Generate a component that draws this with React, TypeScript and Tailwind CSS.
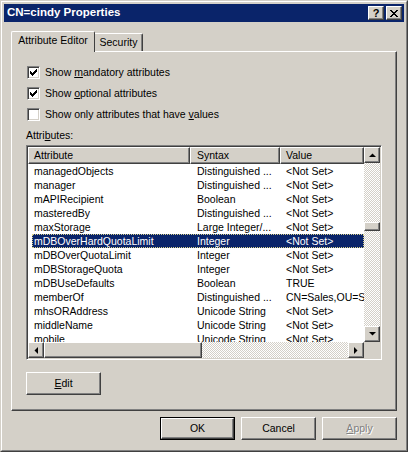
import React from 'react';

const rows: [string, string, string][] = [
  ['managedObjects', 'Distinguished ...', '<Not Set>'],
  ['manager', 'Distinguished ...', '<Not Set>'],
  ['mAPIRecipient', 'Boolean', '<Not Set>'],
  ['masteredBy', 'Distinguished ...', '<Not Set>'],
  ['maxStorage', 'Large Integer/...', '<Not Set>'],
  ['mDBOverHardQuotaLimit', 'Integer', '<Not Set>'],
  ['mDBOverQuotaLimit', 'Integer', '<Not Set>'],
  ['mDBStorageQuota', 'Integer', '<Not Set>'],
  ['mDBUseDefaults', 'Boolean', 'TRUE'],
  ['memberOf', 'Distinguished ...', 'CN=Sales,OU=Sales,DC=corp'],
  ['mhsORAddress', 'Unicode String', '<Not Set>'],
  ['middleName', 'Unicode String', '<Not Set>'],
  ['mobile', 'Unicode String', '<Not Set>'],
];

const raised =
  'border border-t-white border-l-white border-r-[#404040] border-b-[#404040] shadow-[inset_-1px_-1px_0_#808080] bg-[#d4d0c8]';
const sunken =
  'border border-t-[#808080] border-l-[#808080] border-r-white border-b-white shadow-[inset_1px_1px_0_#404040,inset_-1px_-1px_0_#d4d0c8]';
const track = 'bg-[repeating-conic-gradient(#fff_0_25%,#d4d0c8_0_50%)] bg-size-[2px_2px]';

const Check = () => (
  <svg width="7" height="7" viewBox="0 0 7 7" shapeRendering="crispEdges">
    <rect x="0" y="2" width="1" height="3" fill="#000" />
    <rect x="1" y="3" width="1" height="3" fill="#000" />
    <rect x="2" y="4" width="1" height="3" fill="#000" />
    <rect x="3" y="3" width="1" height="3" fill="#000" />
    <rect x="4" y="2" width="1" height="3" fill="#000" />
    <rect x="5" y="1" width="1" height="3" fill="#000" />
    <rect x="6" y="0" width="1" height="3" fill="#000" />
  </svg>
);

const Arrow = ({ dir }: { dir: 'up' | 'down' | 'left' | 'right' }) => {
  const pts = {
    up: '0,4 7,4 3.5,0.5',
    down: '0,0 7,0 3.5,3.5',
    left: '4,0 4,7 0.5,3.5',
    right: '0,0 0,7 3.5,3.5',
  }[dir];
  const vertical = dir === 'up' || dir === 'down';
  return (
    <svg width={vertical ? 7 : 4} height={vertical ? 4 : 7} viewBox={vertical ? '0 0 7 4' : '0 0 4 7'}>
      <polygon points={pts} fill="#000" />
    </svg>
  );
};

const CheckRow = ({ checked, children }: { checked: boolean; children: React.ReactNode }) => (
  <div className="flex items-center gap-[5px] h-[13px]">
    <div className={`w-[13px] h-[13px] bg-white flex items-center justify-center ${sunken}`}>
      {checked && <Check />}
    </div>
    <span>{children}</span>
  </div>
);

const Button = ({ children, disabled }: { children: React.ReactNode; disabled?: boolean }) => (
  <div
    className={`w-[75px] h-[23px] flex items-center justify-center ${raised} ${
      disabled ? 'text-[#808080] [text-shadow:1px_1px_0_#fff]' : ''
    }`}
  >
    {children}
  </div>
);

export default function App() {
  return (
    <div
      className="w-[408px] h-[452px] bg-[#d4d0c8] border border-t-[#d4d0c8] border-l-[#d4d0c8] border-r-[#404040] border-b-[#404040] text-[10.5px] text-black select-none"
      style={{ fontFamily: '"Liberation Sans", Arial, sans-serif' }}
    >
      <div className="h-full border border-t-white border-l-white border-r-[#808080] border-b-[#808080] p-[2px] flex flex-col">
        {/* title bar */}
        <div className="h-[18px] bg-[#0a246a] flex items-center pl-[3px] pr-[2px]">
          <span className="text-white font-bold text-[11.5px] flex-1">CN=cindy Properties</span>
          <div className={`w-[16px] h-[14px] flex items-center justify-center font-bold text-[11px] leading-none ${raised}`}>?</div>
          <div className={`w-[16px] h-[14px] ml-[2px] flex items-center justify-center ${raised}`}>
            <svg width="8" height="7" viewBox="0 0 8 7" shapeRendering="crispEdges">
              <path d="M0 0h2v1h-2zM6 0h2v1h-2zM1 1h2v1h-2zM5 1h2v1h-2zM2 2h4v1h-4zM3 3h2v1h-2zM2 4h4v1h-4zM1 5h2v1h-2zM5 5h2v1h-2zM0 6h2v1h-2zM6 6h2v1h-2z" fill="#000" />
            </svg>
          </div>
        </div>

        {/* tabs */}
        <div className="mt-[9px] ml-[7px] h-[20px] flex items-end">
          <div className="relative z-10 -mb-px h-[21px] w-[84px] bg-[#d4d0c8] border-t border-l border-r border-t-white border-l-white border-r-[#404040] rounded-tl-[2px] rounded-tr-[2px] flex items-center justify-center pb-[2px]">
            Attribute Editor
          </div>
          <div className="h-[18px] w-[48px] border-t border-r border-t-white border-r-[#404040] shadow-[inset_-1px_0_0_#808080] rounded-tr-[2px] flex items-center justify-center">
            Security
          </div>
        </div>

        {/* panel */}
        <div className="ml-[7px] w-[386px] h-[360px] border border-t-white border-l-white border-r-[#404040] border-b-[#404040] shadow-[inset_-1px_-1px_0_#808080] pl-[14px] pt-[14px] flex flex-col">
          <div className="ml-px">
            <CheckRow checked>
              Show <u>m</u>andatory attributes
            </CheckRow>
            <div className="mt-[8px]">
              <CheckRow checked>
                Show <u>o</u>ptional attributes
              </CheckRow>
            </div>
            <div className="mt-[8px]">
              <CheckRow checked={false}>
                Show only attributes that have <u>v</u>alues
              </CheckRow>
            </div>
          </div>
          <div className="mt-[8px] h-[13px] leading-[13px]">
            Attri<u>b</u>utes:
          </div>

          {/* list view */}
          <div className={`mt-[3px] w-[356px] h-[215px] bg-white flex flex-col ${sunken} p-px`}>
            <div className="flex h-[195px]">
              <div className="flex-1 flex flex-col overflow-hidden">
                <div className="flex h-[17px] shrink-0">
                  <div className={`w-[162px] h-full flex items-center pl-[5px] ${raised}`}>Attribute</div>
                  <div className={`w-[90px] h-full flex items-center pl-[6px] ${raised}`}>Syntax</div>
                  <div className={`flex-1 h-full flex items-center pl-[5px] ${raised}`}>Value</div>
                </div>
                <div className="flex-1 overflow-hidden">
                  {rows.map(([a, s, v], i) => {
                    const sel = i === 5;
                    return (
                      <div
                        key={a}
                        className={`ml-[4px] h-[14px] pt-px flex items-center whitespace-nowrap ${
                          sel ? 'bg-[#0a246a] text-white outline-1 outline-dotted outline-[#d8d08a] -outline-offset-1' : ''
                        }`}
                      >
                        <div className="w-[158px] pl-[2px] overflow-hidden">{a}</div>
                        <div className="w-[90px] pl-[7px] overflow-hidden">{s}</div>
                        <div className="flex-1 pl-[6px] overflow-hidden">{v}</div>
                      </div>
                    );
                  })}
                </div>
              </div>
              {/* vertical scrollbar */}
              <div className={`w-[16px] flex flex-col ${track}`}>
                <div className={`h-[16px] flex items-center justify-center ${raised}`}>
                  <Arrow dir="up" />
                </div>
                <div className="h-[59px]" />
                <div className={`h-[9px] ${raised}`} />
                <div className="flex-1" />
                <div className={`h-[16px] flex items-center justify-center ${raised}`}>
                  <Arrow dir="down" />
                </div>
              </div>
            </div>
            {/* horizontal scrollbar */}
            <div className="flex h-[16px]">
              <div className={`flex-1 flex ${track}`}>
                <div className={`w-[16px] flex items-center justify-center ${raised}`}>
                  <Arrow dir="left" />
                </div>
                <div className={`w-[158px] ${raised}`} />
                <div className="flex-1" />
                <div className={`w-[16px] flex items-center justify-center ${raised}`}>
                  <Arrow dir="right" />
                </div>
              </div>
              <div className="w-[16px] bg-[#d4d0c8]" />
            </div>
          </div>

          <div className="mt-[12px]">
            <Button>
              <u>E</u>dit
            </Button>
          </div>
        </div>

        {/* dialog buttons */}
        <div className="mt-[6px] mr-[7px] flex justify-end gap-[6px]">
          <div className="border border-black">
            <div className="w-[73px] h-[21px] flex items-center justify-center border border-t-white border-l-white border-r-[#404040] border-b-[#404040] shadow-[inset_-1px_-1px_0_#808080]">
              OK
            </div>
          </div>
          <Button>Cancel</Button>
          <Button disabled>
            <u>A</u>pply
          </Button>
        </div>
      </div>
    </div>
  );
}
